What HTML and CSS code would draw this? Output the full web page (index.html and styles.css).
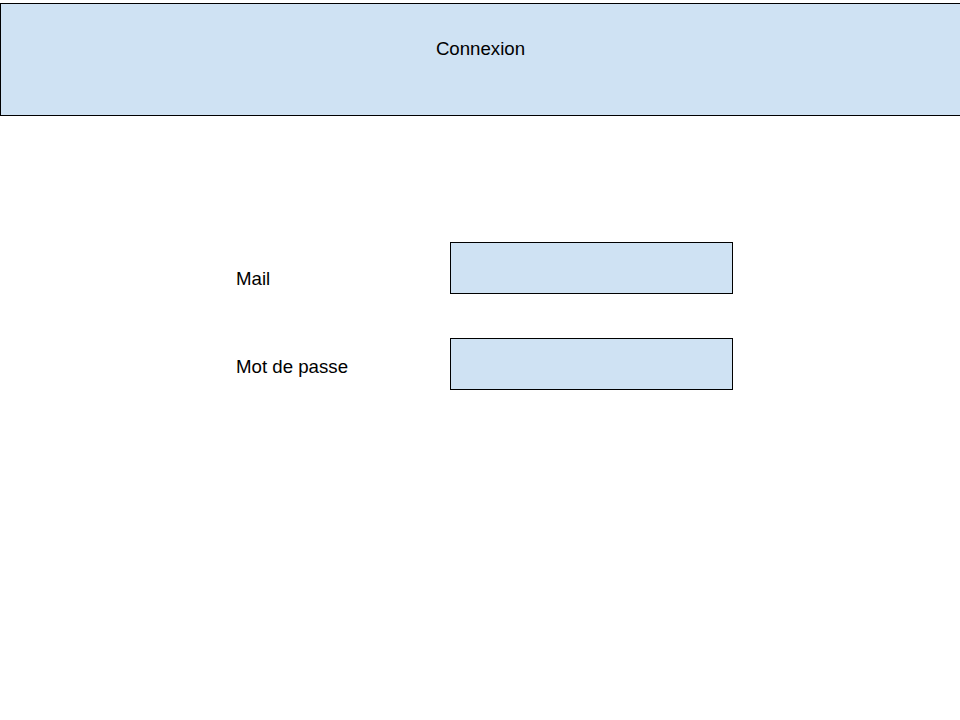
FILE: index.html
```html
<!DOCTYPE html>
<html lang="fr">
<head>
<meta charset="utf-8">
<title>Connexion</title>
<link rel="stylesheet" href="styles.css">
</head>
<body>
<header class="topbar">Connexion</header>
<form class="login">
  <div class="row">
    <label class="label label-mail" for="mail">Mail</label>
    <div class="field" id="mail"></div>
  </div>
  <div class="row">
    <label class="label label-pass" for="pass">Mot de passe</label>
    <div class="field" id="pass"></div>
  </div>
</form>
</body>
</html>
```
FILE: styles.css
```css
html, body {
  margin: 0;
  padding: 0;
  background: #ffffff;
}
body {
  font-family: "Liberation Sans", Arial, sans-serif;
  font-size: 18.67px;
  line-height: 21px;
  color: #000;
}
.topbar {
  margin-top: 3px;
  height: 77px;
  padding-top: 34px;
  box-sizing: content-box;
  border: 1px solid #000;
  border-right: 0;
  background: #cfe2f3;
  text-align: center;
}
.login {
  margin: 126px 0 0 0;
  padding-left: 236px;
  display: flex;
  flex-direction: column;
  gap: 44px;
}
.row {
  display: flex;
  align-items: flex-start;
}
.label {
  width: 214px;
}
.label-mail {
  padding-top: 26px;
}
.label-pass {
  padding-top: 18px;
}
.field {
  width: 283px;
  height: 52px;
  box-sizing: border-box;
  border: 1px solid #000;
  background: #cfe2f3;
}
```
